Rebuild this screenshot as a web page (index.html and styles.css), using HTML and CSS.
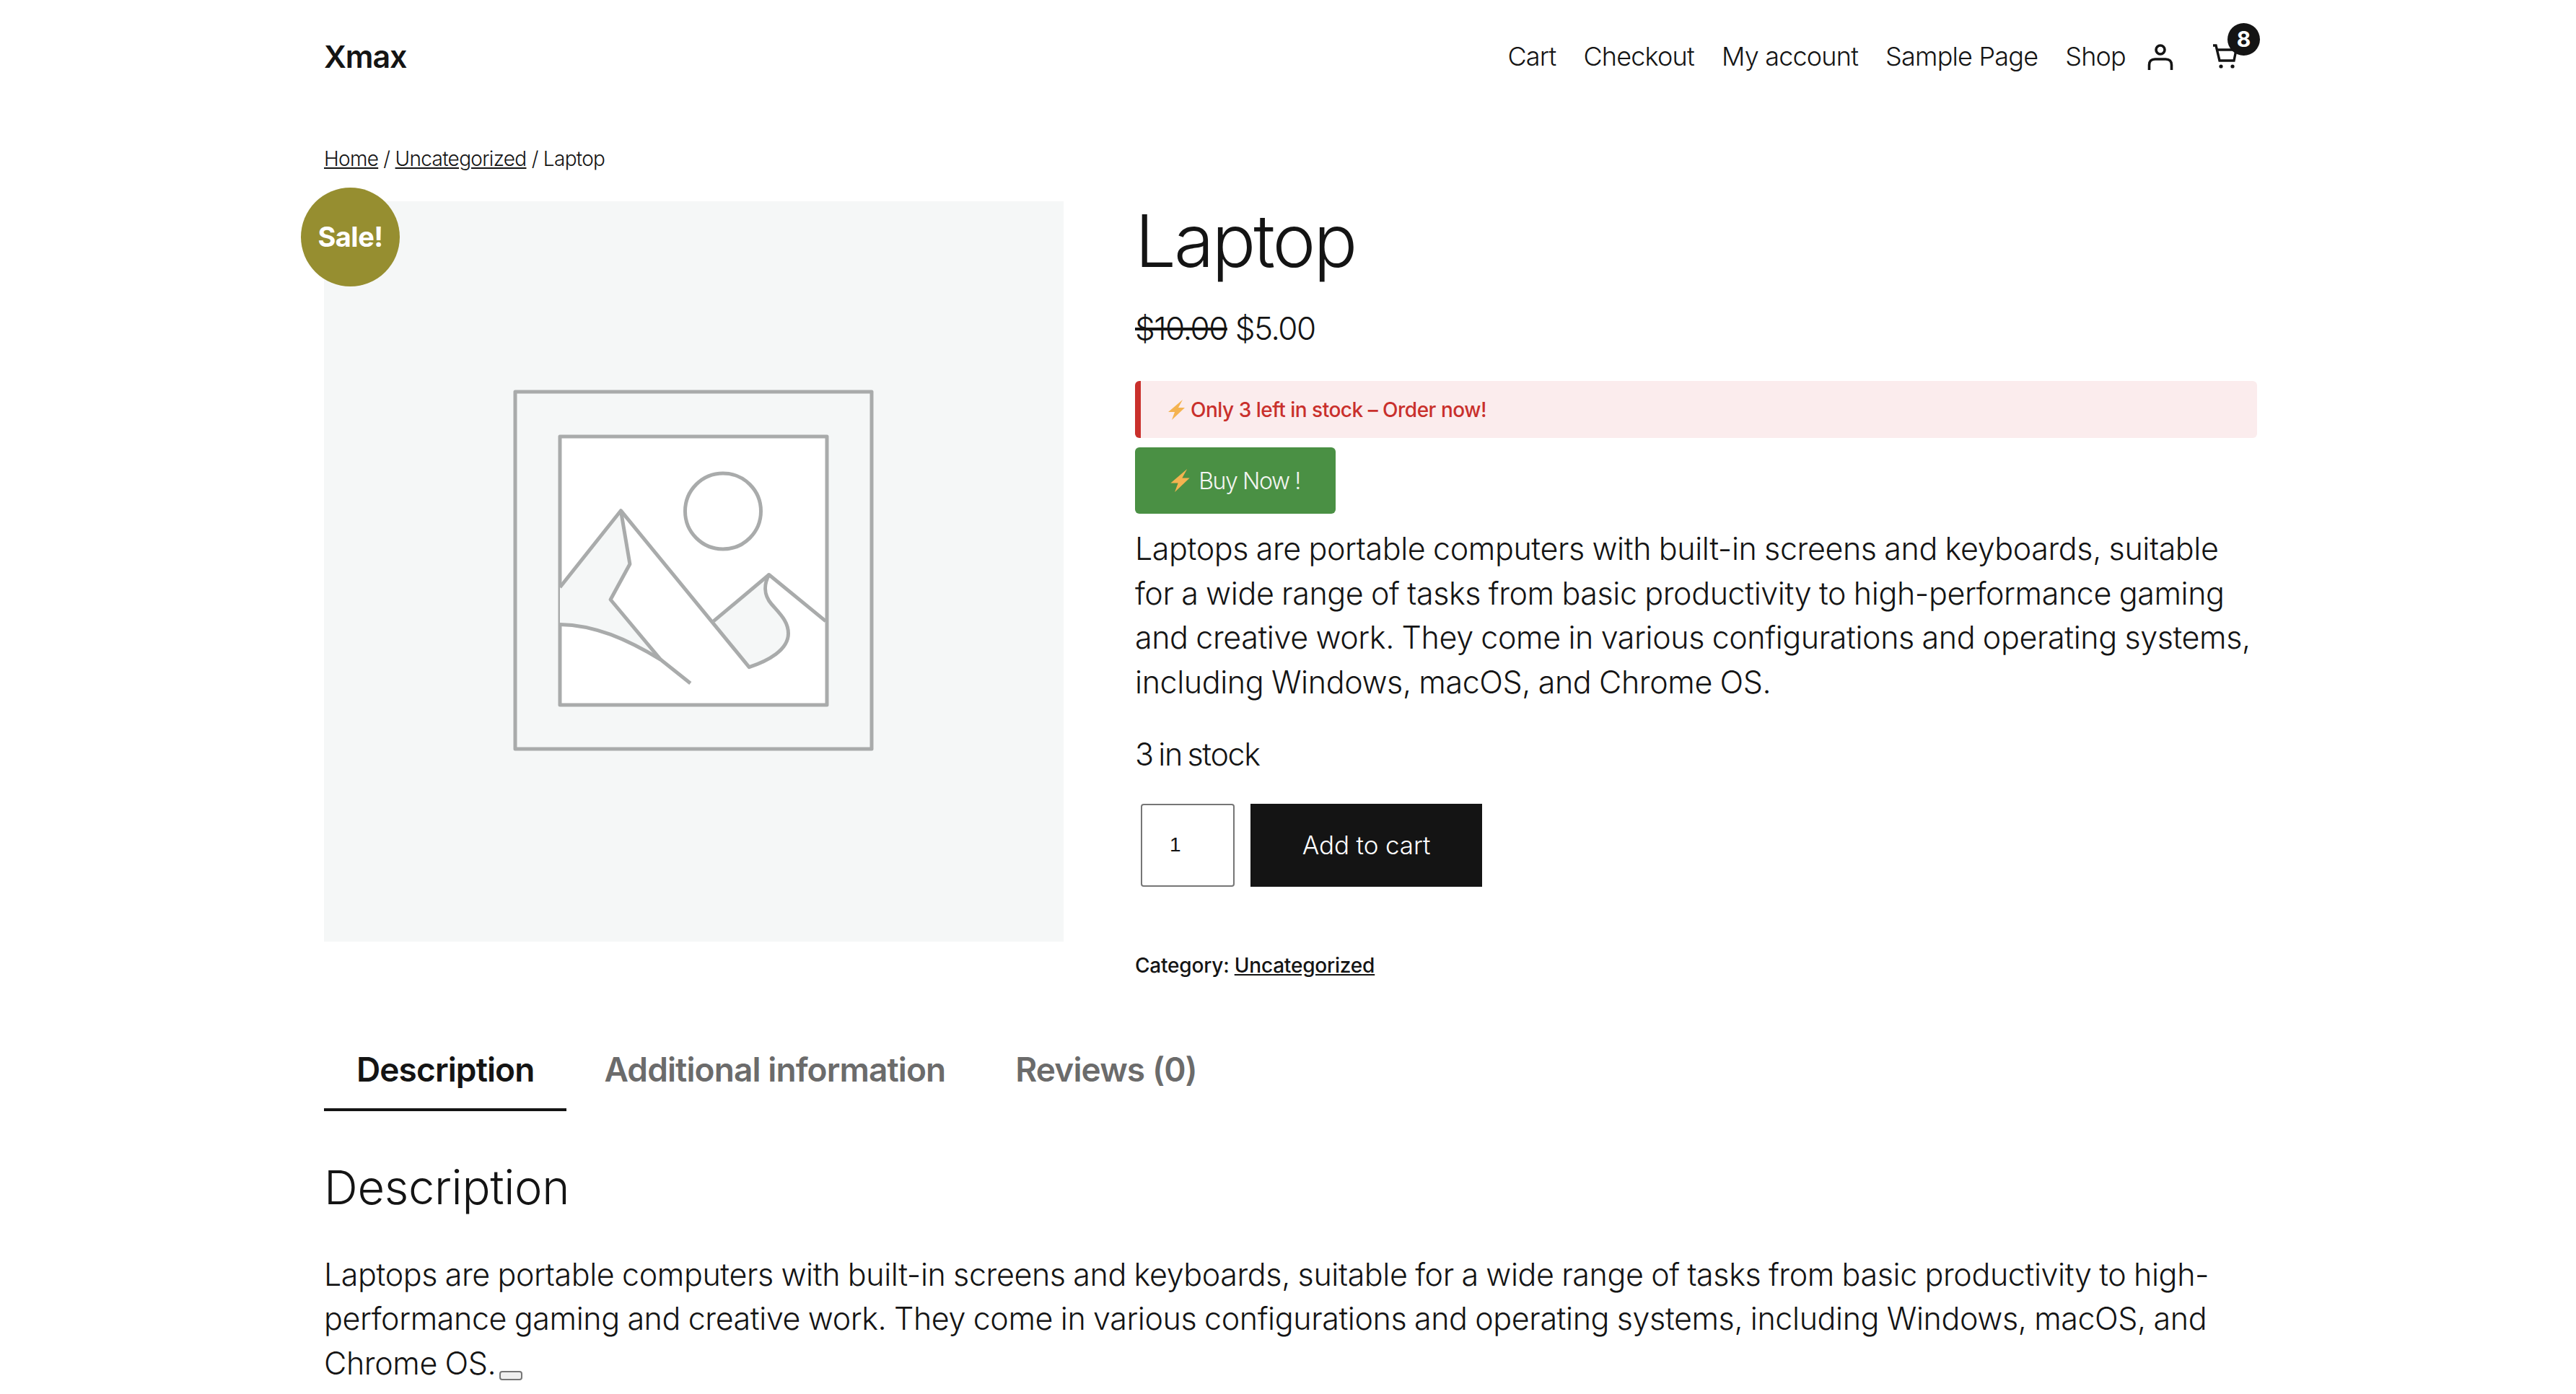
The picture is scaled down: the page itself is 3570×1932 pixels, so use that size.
FILE: index.html
```html
<!DOCTYPE html>
<html lang="en">
<head>
    <meta charset="UTF-8">
    <title>Laptop – Xmax</title>
    <link rel="stylesheet" href="styles.css">
</head>
<body>
    <header class="site-header">
        <a class="site-title" href="#">Xmax</a>
        <nav class="main-nav">
            <a href="#">Cart</a>
            <a href="#">Checkout</a>
            <a href="#">My account</a>
            <a href="#">Sample Page</a>
            <a href="#">Shop</a>
            <svg class="user-icon" viewBox="0 0 36 36" fill="none" stroke="#141414" stroke-width="3.6">
                <circle cx="18" cy="8" r="6"/>
                <path d="M2.5 36v-7c0-5 3-8 8-8h15c5 0 8 3 8 8v7"/>
            </svg>
            <span class="cart-link">
                <svg class="cart-icon" viewBox="0 0 36 36" fill="none" stroke="#141414" stroke-width="3.4">
                    <path d="M1 3h4l5 21h20l3-15H7"/>
                    <circle cx="12" cy="32" r="2.6" fill="#141414" stroke="none"/>
                    <circle cx="28" cy="32" r="2.6" fill="#141414" stroke="none"/>
                </svg>
                <span class="cart-count">8</span>
            </span>
        </nav>
    </header>

    <main class="page">
        <div class="breadcrumb"><a href="#">Home</a> / <a href="#">Uncategorized</a> / Laptop</div>

        <section class="product">
            <div class="gallery">
                <span class="sale-badge">Sale!</span>
                <svg class="placeholder" viewBox="0 0 1025 1026" fill="none" stroke="#a9abab" stroke-width="5" stroke-linejoin="round">
                    <rect x="265" y="264" width="494" height="495"/>
                    <rect x="327" y="326" width="370" height="372" fill="#fff"/>
                    <circle cx="553" cy="429.5" r="52.5"/>
                    <path d="M327 535 411.4 428.7 423.9 502.7 397.1 552 466.7 635.3C420 607 375 587 327 586.4Z" fill="#f5f7f7" stroke="none"/>
                    <path d="M539.9 581.9 616.7 517.5C610 530 609 545 620 558 632 572 643.5 582 643.5 599 643.5 622 615 637 589.2 645.6Z" fill="#f5f7f7" stroke="none"/>
                    <path d="M327 535 411.4 428.7 589.2 645.6C615 637 643.5 622 643.5 599 643.5 582 632 572 620 558 609 545 610 530 616.7 517.5L695.3 581.9"/>
                    <path d="M539.9 581.9 616.7 517.5"/>
                    <path d="M411.4 428.7 423.9 502.7 397.1 552 466.7 635.3"/>
                    <path d="M327 586.4C375 587 420 607 466.7 635.3L507.8 668"/>
                </svg>
            </div>

            <div class="summary">
                <h1 class="product-title">Laptop</h1>
                <p class="price"><del>$10.00</del> $5.00</p>
                <div class="stock-alert">
                    <svg class="bolt" viewBox="0 0 23 28"><path d="M20 0 0 17h9L5 28 23 11H14Z"/></svg>
                    Only 3 left in stock – Order now!
                </div>
                <a class="buy-now" href="#">
                    <svg class="bolt bolt-large" viewBox="0 0 23 28"><path d="M20 0 0 17h9L5 28 23 11H14Z"/></svg>
                    Buy Now !
                </a>
                <p class="short-desc">Laptops are portable computers with built-in screens and keyboards, suitable for a wide range of tasks from basic productivity to high-performance gaming and creative work. They come in various configurations and operating systems, including Windows, macOS, and Chrome OS.</p>
                <p class="stock">3 in stock</p>
                <form class="cart-form">
                    <input class="qty" type="number" value="1" min="1">
                    <button class="add-to-cart" type="button">Add to cart</button>
                </form>
                <p class="meta">Category: <a href="#">Uncategorized</a></p>
            </div>
        </section>

        <section class="tabs">
            <ul class="tab-list">
                <li class="active">Description</li>
                <li>Additional information</li>
                <li>Reviews (0)</li>
            </ul>
            <h2 class="tab-heading">Description</h2>
            <p class="tab-text">Laptops are portable computers with built-in screens and keyboards, suitable for a wide range of tasks from basic productivity to high-performance gaming and creative work. They come in various configurations and operating systems, including Windows, macOS, and Chrome OS. <button class="mini-btn" type="button"></button></p>
        </section>
    </main>
</body>
</html>
```

FILE: styles.css
```css
* {
    box-sizing: border-box;
}
body {
    margin: 0;
    height: 1932px;
    overflow: hidden;
    background: #fff;
    color: #141414;
    font-family: Inter, "Liberation Sans", sans-serif;
    font-weight: 300;
}
a {
    color: inherit;
}
p, h1, h2, ul {
    margin: 0;
    padding: 0;
}

.site-header {
    display: flex;
    justify-content: space-between;
    align-items: center;
    height: 156px;
    margin: 0 442px 0 449px;
}
.site-title {
    font-size: 43px;
    font-weight: 600;
    letter-spacing: -1.1px;
    text-decoration: none;
}
.main-nav {
    display: flex;
    align-items: center;
    gap: 38px;
    font-size: 36px;
    letter-spacing: -0.8px;
}
.main-nav a {
    text-decoration: none;
}
.user-icon {
    width: 36px;
    height: 36px;
    margin: 2px 0 0 -8px;
}
.cart-link {
    position: relative;
    display: block;
    width: 36px;
    height: 36px;
    margin-left: 16px;
    margin-right: 26px;
}
.cart-icon {
    width: 36px;
    height: 36px;
}
.cart-count {
    position: absolute;
    top: -28px;
    right: -30px;
    width: 45px;
    height: 45px;
    border-radius: 50%;
    background: #141414;
    color: #fff;
    font-size: 30px;
    font-weight: 700;
    line-height: 45px;
    text-align: center;
    letter-spacing: 0;
}

.page {
    margin: 0 442px 0 449px;
}
.breadcrumb {
    height: 123px;
    padding-top: 45px;
    font-size: 28px;
    line-height: 38px;
    letter-spacing: -0.7px;
}

.product {
    display: flex;
    gap: 99px;
}
.gallery {
    position: relative;
    flex: none;
    width: 1025px;
    height: 1026px;
    background: #f5f7f7;
}
.placeholder {
    display: block;
    width: 100%;
    height: 100%;
}
.sale-badge {
    position: absolute;
    top: -19px;
    left: -32px;
    width: 137px;
    height: 137px;
    border-radius: 50%;
    background: #968e30;
    color: #fff;
    font-size: 38px;
    font-weight: 700;
    line-height: 137px;
    text-align: center;
    letter-spacing: -0.5px;
}

.summary {
    flex: 1;
}
.product-title {
    font-size: 101px;
    font-weight: 300;
    line-height: 118px;
    letter-spacing: -3px;
    margin-top: -5px;
}
.price {
    margin-top: 33px;
    font-size: 44px;
    line-height: 60px;
    letter-spacing: -1.5px;
}
.stock-alert {
    display: flex;
    align-items: center;
    gap: 8px;
    height: 79px;
    margin-top: 43px;
    padding-left: 38px;
    border-left: 8px solid #c9302c;
    border-radius: 6px;
    background: #fbeced;
    color: #c9302c;
    font-size: 28px;
    font-weight: 500;
    letter-spacing: -0.5px;
}
.bolt {
    width: 23px;
    height: 28px;
    fill: #f4b350;
}
.bolt-large {
    width: 27px;
    height: 32px;
}
.buy-now {
    display: inline-flex;
    align-items: center;
    justify-content: center;
    gap: 12px;
    width: 278px;
    height: 92px;
    margin-top: 13px;
    border-radius: 6px;
    background: #4a9044;
    color: #f2f5f1;
    font-size: 32px;
    text-decoration: none;
    letter-spacing: -1.4px;
}
.short-desc {
    margin-top: 18px;
    font-size: 43px;
    line-height: 61.5px;
    letter-spacing: -0.4px;
    word-spacing: -1px;
}
.stock {
    margin-top: 39px;
    font-size: 43px;
    line-height: 61.5px;
    letter-spacing: -1.4px;
    word-spacing: -3px;
}
.cart-form {
    display: flex;
    gap: 22px;
    margin: 37px 0 0 8px;
}
.qty {
    width: 130px;
    height: 115px;
    padding: 0 0 0 38px;
    border: 2px solid #767676;
    border-radius: 4px;
    background: #fff;
    color: #141414;
    font-family: "Liberation Sans", sans-serif;
    font-size: 28px;
    -moz-appearance: textfield;
}
.qty::-webkit-inner-spin-button {
    display: none;
}
.add-to-cart {
    width: 321px;
    height: 115px;
    border: none;
    background: #141414;
    color: #fff;
    font-family: inherit;
    font-size: 35px;
    font-weight: 300;
    letter-spacing: -0.1px;
}
.meta {
    margin-top: 90px;
    font-size: 28px;
    font-weight: 500;
    line-height: 38px;
    letter-spacing: -0.2px;
}

.tab-list {
    display: flex;
    gap: 7px;
    margin-top: 70px;
    list-style: none;
}
.tab-list li {
    height: 113px;
    padding: 0 45px;
    border-bottom: 4px solid transparent;
    color: #6b6b6b;
    font-size: 46px;
    font-weight: 600;
    line-height: 110px;
    letter-spacing: -0.9px;
}
.tab-list li.active {
    border-bottom-color: #141414;
    color: #141414;
}
.tab-heading {
    margin-top: 63px;
    font-size: 65px;
    font-weight: 300;
    line-height: 86px;
    letter-spacing: -0.35px;
}
.tab-text {
    margin-top: 47px;
    font-size: 43px;
    line-height: 61.5px;
    letter-spacing: -0.4px;
    word-spacing: -1px;
}
.mini-btn {
    width: 32px;
    height: 13px;
    margin-left: -6px;
    padding: 0;
    border: 2px solid #767676;
    border-radius: 4px;
    background: #efefef;
    vertical-align: -6px;
}
```
